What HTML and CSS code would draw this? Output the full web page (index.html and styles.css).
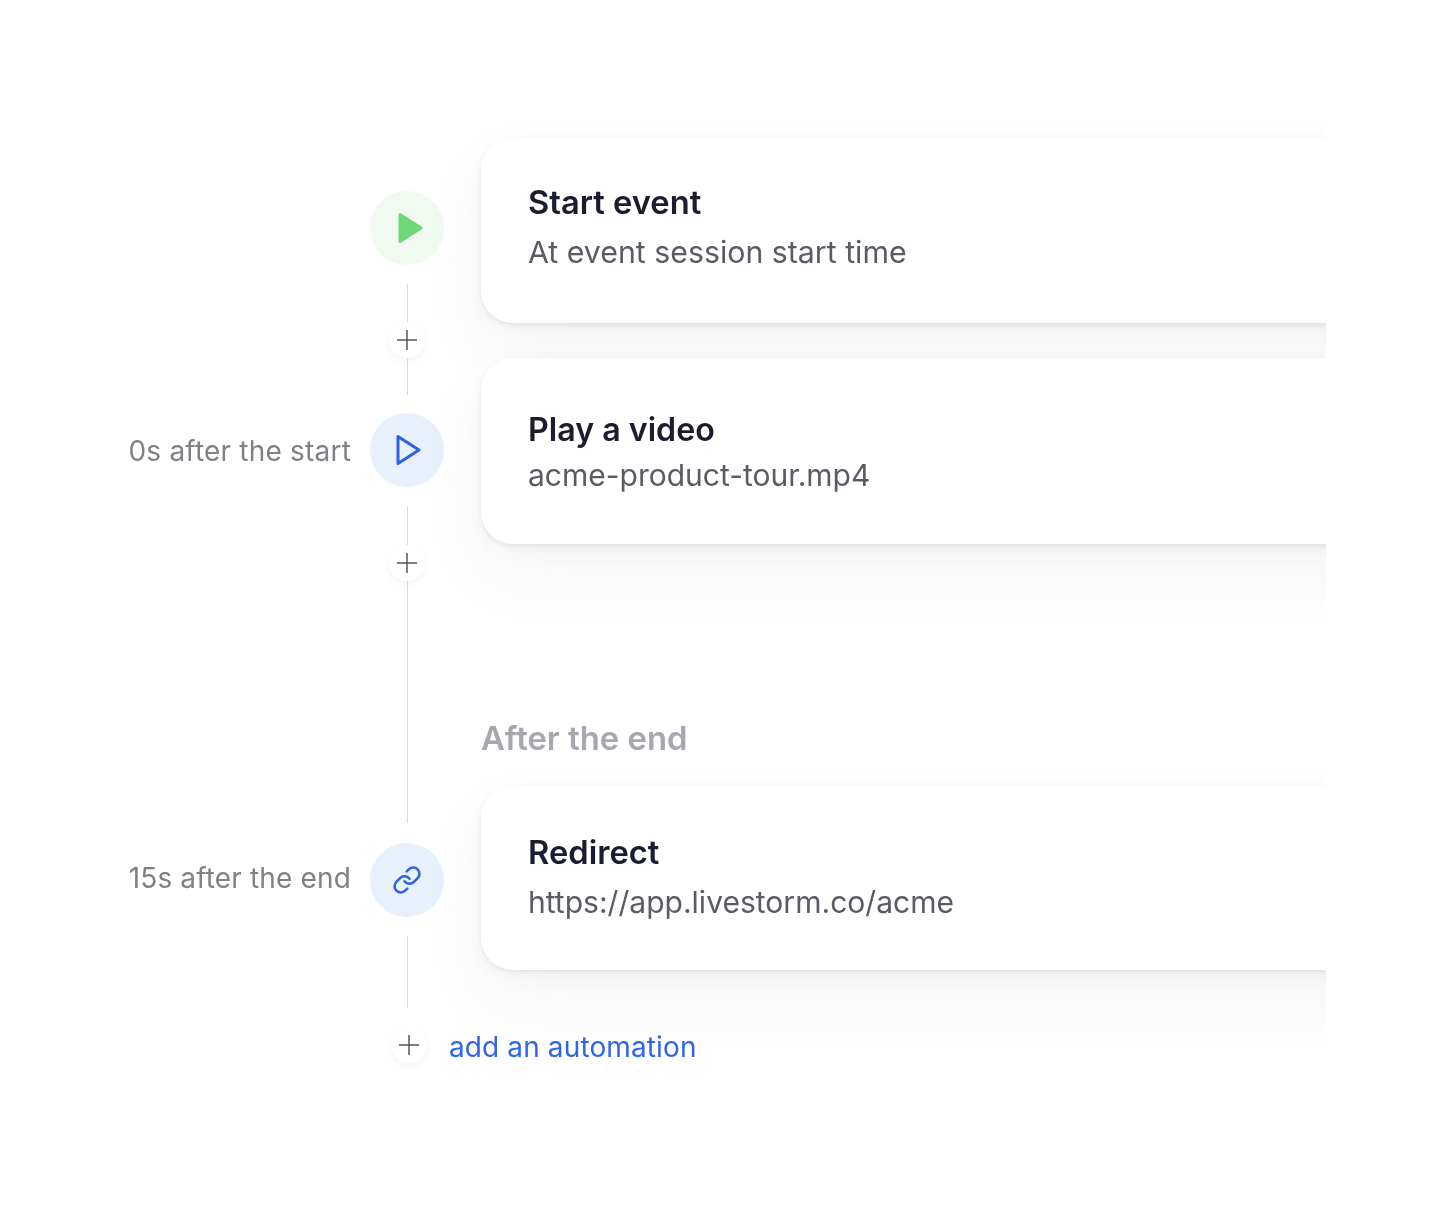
FILE: index.html
```html
<!DOCTYPE html>
<html>
	<head>
		<meta charset="utf-8" />
		<title>Automations</title>
		<link rel="stylesheet" href="styles.css">
	</head>
	<body>
		<main class="stage">
			<div class="flow">
				<div class="timeline">
					<div class="step">
						<div class="node node-green">
							<svg class="icon-green" width="30" height="34" viewBox="0 0 30 34"><path d="M5 3.5 L26 17 L5 30.5 Z" fill="#6fd67a" stroke="#6fd67a" stroke-width="3" stroke-linejoin="round"/></svg>
						</div>
					</div>
					<div class="connector">
						<div class="line line-a"></div>
						<div class="plus"><svg width="22" height="22" viewBox="0 0 22 22"><path d="M11 1V21M1 11H21" stroke="#55565c" stroke-width="1.5"/></svg></div>
						<div class="line line-b"></div>
					</div>
					<div class="step step-second">
						<span class="delay delay-start">0s after the start</span>
						<div class="node node-blue">
							<svg class="icon-blue" width="30" height="34" viewBox="0 0 30 34"><path d="M5 3.5 L26 17 L5 30.5 Z" fill="none" stroke="#2a62e0" stroke-width="3" stroke-linejoin="round"/></svg>
						</div>
					</div>
					<div class="connector connector-long">
						<div class="line line-a"></div>
						<div class="plus"><svg width="22" height="22" viewBox="0 0 22 22"><path d="M11 1V21M1 11H21" stroke="#55565c" stroke-width="1.5"/></svg></div>
						<div class="line line-long"></div>
					</div>
					<div class="step">
						<span class="delay delay-end">15s after the end</span>
						<div class="node node-blue">
							<svg class="icon-link" width="30" height="30" viewBox="0 0 24 24" fill="none" stroke="#2a62e0" stroke-width="2" stroke-linecap="round" stroke-linejoin="round"><path d="M10 13a5 5 0 0 0 7.54.54l3-3a5 5 0 0 0-7.07-7.07l-1.72 1.71"/><path d="M14 11a5 5 0 0 0-7.54-.54l-3 3a5 5 0 0 0 7.07 7.07l1.71-1.71"/></svg>
						</div>
					</div>
					<div class="connector">
						<div class="line line-end"></div>
					</div>
				</div>
				<div class="cards">
					<section class="card">
						<h2>Start event</h2>
						<p>At event session start time</p>
					</section>
					<section class="card card-tight">
						<h2>Play a video</h2>
						<p>acme-product-tour.mp4</p>
					</section>
					<h3>After the end</h3>
					<section class="card card-last">
						<h2>Redirect</h2>
						<p>https://app.livestorm.co/acme</p>
					</section>
				</div>
			</div>
			<div class="add-row">
				<div class="plus"><svg width="22" height="22" viewBox="0 0 22 22"><path d="M11 1V21M1 11H21" stroke="#55565c" stroke-width="1.5"/></svg></div>
				<a class="add-link">add an automation</a>
			</div>
		</main>
	</body>
</html>
```

FILE: styles.css
```css
html, body {
	margin: 0;
	background: #fff;
}
body {
	font-family: Inter, 'Liberation Sans', sans-serif;
}
.stage {
	width: 1326px;
	height: 1212px;
	box-sizing: border-box;
	padding-top: 137px;
	overflow: hidden;
}
.flow {
	display: flex;
	align-items: flex-start;
}
.timeline {
	flex: none;
	width: 444px;
	padding-top: 54px;
	display: flex;
	flex-direction: column;
	align-items: flex-end;
}
.step {
	display: flex;
	align-items: center;
	gap: 19px;
}
.step-second {
	margin-top: -1px;
}
.delay {
	font-size: 28px;
	letter-spacing: 0.2px;
	color: #808186;
	white-space: nowrap;
}
.delay-start {
	margin-top: 2px;
}
.delay-end {
	margin-top: -4px;
	letter-spacing: 0.15px;
}
.node {
	width: 74px;
	height: 74px;
	border-radius: 50%;
	display: flex;
	align-items: center;
	justify-content: center;
}
.node-green {
	background: #f1faf1;
}
.node-blue {
	background: #e8f0fc;
}
.icon-green {
	margin-left: 6px;
}
.icon-blue {
	margin-left: 2px;
}
.connector {
	width: 74px;
	padding: 19px 0;
	display: flex;
	flex-direction: column;
	align-items: center;
}
.connector-long {
	padding: 20px 0;
}
.line {
	width: 1px;
	background: #d8d9e2;
}
.line-a { height: 38px; }
.line-b { height: 37px; }
.line-long { height: 242px; }
.line-end { height: 72px; }
.plus {
	flex: none;
	width: 36px;
	height: 36px;
	border-radius: 50%;
	background: #fff;
	box-shadow: 0 3px 7px rgba(30, 30, 60, 0.05);
	display: flex;
	align-items: center;
	justify-content: center;
}
.cards {
	flex: none;
	width: 1000px;
	margin-left: 37px;
}
.card {
	height: 186px;
	box-sizing: border-box;
	padding: 45px 46px 0 47px;
	background: #fff;
	border-radius: 32px 0 0 32px;
	box-shadow: 0 2px 4px rgba(40, 40, 60, 0.08), 0 8px 20px rgba(40, 40, 60, 0.025), 0 30px 70px rgba(40, 40, 60, 0.05);
	margin-bottom: 35px;
}
.card h2 {
	margin: 0;
	font-size: 32.7px;
	line-height: 40px;
	font-weight: 600;
	color: #1b1c30;
}
.card p {
	margin: 10px 0 0;
	font-size: 30.3px;
	line-height: 40px;
	color: #5a5b64;
}
.card-tight {
	padding-top: 52px;
}
.card-tight h2 {
	font-size: 32.2px;
}
.card-tight p {
	margin-top: 5px;
	font-size: 30px;
}
.card-last {
	height: 185px;
	padding-top: 47px;
}
.card-last p {
	font-size: 30.05px;
}
.cards h3 {
	margin: 0 0 27px;
	padding-top: 139px;
	font-size: 32.8px;
	line-height: 40px;
	font-weight: 600;
	color: #a6a7af;
}
.add-row {
	height: 36px;
	padding-left: 391px;
	display: flex;
	align-items: center;
	gap: 22px;
}
.add-link {
	margin-top: 3px;
	font-size: 28px;
	letter-spacing: 0.12px;
	color: #2f66e8;
}
/* the source is a soft capture, text and icons are slightly out of focus */
.card h2, .card p, .cards h3, .delay, .add-link, .node svg, .plus svg {
	filter: blur(0.4px);
}
```
